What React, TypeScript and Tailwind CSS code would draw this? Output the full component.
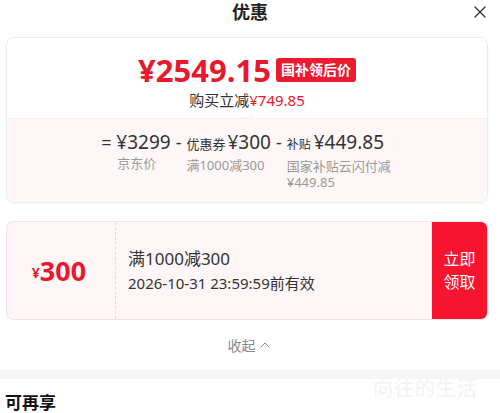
import { X, ChevronUp } from 'lucide-react';

const font = { fontFamily: '"Noto Sans", "Noto Sans CJK SC", sans-serif' };

function PriceBreakdown() {
  return (
    <div className="flex items-start justify-center pt-[12px] text-[#333]">
      <span className="w-[15px] text-[18px] leading-[22px]">=</span>
      <div className="flex flex-col">
        <span className="text-[19px] leading-[22px]">¥3299</span>
        <span className="mt-[2px] pl-[1px] text-[13px] leading-[16px] text-[#999]">京东价</span>
      </div>
      <span className="mx-[5px] text-[18px] leading-[22px]">-</span>
      <div className="flex flex-col">
        <div className="flex items-baseline">
          <span className="text-[13px] leading-[22px]">优惠券</span>
          <span className="ml-[2px] text-[19px] leading-[22px]">¥300</span>
        </div>
        <span className="mt-[2px] text-[13px] leading-[16px] text-[#999]">满1000减300</span>
      </div>
      <span className="mx-[5px] text-[18px] leading-[22px]">-</span>
      <div className="flex flex-col">
        <div className="flex items-baseline">
          <span className="text-[12px] leading-[22px]">补贴</span>
          <span className="ml-[3px] text-[19px] leading-[22px]">¥449.85</span>
        </div>
        <span className="mt-[2px] w-[106px] text-[13px] leading-[16px] text-[#999]">
          国家补贴云闪付减 ¥449.85
        </span>
      </div>
    </div>
  );
}

function Coupon() {
  return (
    <div className="ml-[6px] mr-[12px] mt-[18px] flex h-[99px] overflow-hidden rounded-[7px] border border-[#f6e1e4] bg-[#fdf5f6]">
      <div className="flex w-[109px] items-center justify-center border-r border-dashed border-[#f2d3d8] pr-[4px] text-[#e8192f]">
        <span className="mt-[4px] text-[14px] font-bold">¥</span>
        <span className="text-[27px] font-bold leading-none">300</span>
      </div>
      <div className="flex flex-1 flex-col justify-center pl-[12px] text-[#333]">
        <span className="text-[17px] leading-[24px]">满1000减300</span>
        <span className="mt-[1px] text-[15px] leading-[22px]">2026-10-31 23:59:59前有效</span>
      </div>
      <button className="flex w-[55px] flex-col items-center justify-center bg-[#f7142e] text-[16px] leading-[23px] text-white">
        <span>立即</span>
        <span>领取</span>
      </button>
    </div>
  );
}

export default function App() {
  return (
    <div className="relative h-[413px] w-[500px] overflow-hidden bg-white" style={font}>
      <div className="relative flex h-[24px] items-center justify-center">
        <h1 className="text-[18px] font-bold text-[#222]">优惠</h1>
        <X className="absolute right-[10px] top-[2px] h-[20px] w-[20px] text-[#333]" strokeWidth={1.5} />
      </div>

      <div className="ml-[6px] mr-[12px] mt-[13px] overflow-hidden rounded-[8px] border border-[#ececec] shadow-[0_1px_3px_rgba(0,0,0,0.04)]">
        <div className="relative flex h-[80px] flex-col items-center bg-white pt-[14px]">
          <div className="flex items-center">
            <span className="text-[31px] font-bold leading-[36px] text-[#e8192f]">¥2549.15</span>
            <span className="ml-[5px] rounded-[3px] bg-[#ea1a30] px-[5px] text-[14px] font-bold leading-[24px] text-white">
              国补领后价
            </span>
          </div>
          <div className="mt-[2px] text-[15px] leading-[20px] text-[#333]">
            购买立减<span className="text-[#e8192f]">¥749.85</span>
          </div>
          <div className="absolute bottom-0 left-[238px] h-0 w-0 border-x-[6px] border-b-[5px] border-x-transparent border-b-[#fdf6f6]" />
        </div>
        <div className="h-[84px] border-t border-[#fbeeee] bg-[#fdf7f7]">
          <PriceBreakdown />
        </div>
      </div>

      <Coupon />

      <div className="flex h-[50px] items-center justify-center text-[14px] text-[#888]">
        <span>收起</span>
        <ChevronUp className="ml-[1px] h-[16px] w-[16px]" strokeWidth={1.5} />
      </div>

      <div className="h-[9px] bg-[#f6f6f8]" />

      <div className="relative">
        <h2 className="pl-[5px] pt-[14px] text-[17px] font-bold leading-[20px] text-[#111]">可再享</h2>
        <span className="absolute right-[22px] top-[-5px] text-[20px] tracking-[1px] text-[#f3f3f3]">
          向往的生活
        </span>
      </div>
    </div>
  );
}
